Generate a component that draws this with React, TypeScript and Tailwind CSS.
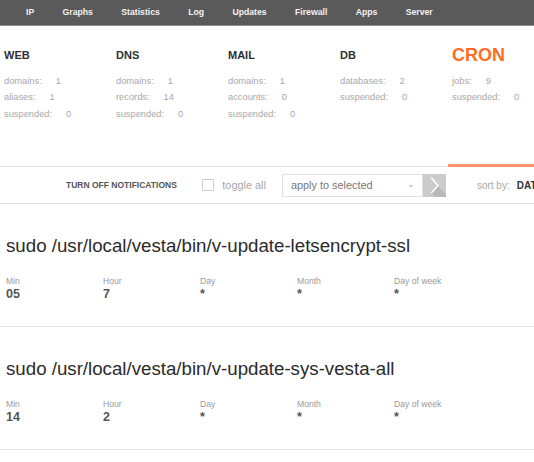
import React from 'react'

const nav = ['IP', 'Graphs', 'Statistics', 'Log', 'Updates', 'Firewall', 'Apps', 'Server']

const stats: { title: string; active?: boolean; rows: [string, string][] }[] = [
  { title: 'WEB', rows: [['domains:', '1'], ['aliases:', '1'], ['suspended:', '0']] },
  { title: 'DNS', rows: [['domains:', '1'], ['records:', '14'], ['suspended:', '0']] },
  { title: 'MAIL', rows: [['domains:', '1'], ['accounts:', '0'], ['suspended:', '0']] },
  { title: 'DB', rows: [['databases:', '2'], ['suspended:', '0']] },
  { title: 'CRON', active: true, rows: [['jobs:', '9'], ['suspended:', '0']] },
]

const jobs = [
  { cmd: 'sudo /usr/local/vesta/bin/v-update-letsencrypt-ssl', min: '05', hour: '7', day: '*', month: '*', dow: '*' },
  { cmd: 'sudo /usr/local/vesta/bin/v-update-sys-vesta-all', min: '14', hour: '2', day: '*', month: '*', dow: '*' },
]

function GoButton() {
  return (
    <svg width="23" height="23" viewBox="0 0 23 23" className="block shrink-0">
      <rect width="23" height="23" fill="#cbcbcb" />
      <polygon points="15,11.7 23,19.7 23,23 12.3,23 8.3,19" fill="#b9b9b9" />
      <polyline points="8.3,3.7 15,11.5 8.3,19" fill="none" stroke="#ffffff" strokeWidth="1.6" />
    </svg>
  )
}

export default function App() {
  return (
    <div className="w-[534px] overflow-hidden bg-white font-['Liberation_Sans',Arial,sans-serif]">
      {/* Top menu */}
      <div className="flex h-[26px] items-center gap-[28.3px] border-b border-[#8c8c8c] bg-[#5a5a5a] pl-[26px]">
        {nav.map((n) => (
          <span key={n} className="text-[8.7px] font-bold text-[#f2f2f2]">
            {n}
          </span>
        ))}
      </div>

      {/* Stats */}
      <div className="flex h-[141px] w-[560px]">
        {stats.map((s) => (
          <div
            key={s.title}
            className={
              s.active
                ? 'w-[112px] shrink-0 border-b-[3px] border-[#ff9468] pl-[4px] pt-[15px]'
                : 'w-[112px] shrink-0 border-b border-[#e3e3e3] pl-[4px] pt-[15px]'
            }
          >
            <div className="flex h-[20px] items-end">
              {s.active ? (
                <span className="text-[18px] font-bold leading-[11px] text-[#ff6b1f]">{s.title}</span>
              ) : (
                <span className="text-[11px] font-bold leading-[11px] text-[#2f2f36]">{s.title}</span>
              )}
            </div>
            <div className="mt-[11.7px] text-[9.3px] leading-[16.7px] text-[#a8a8a8]">
              {s.rows.map(([k, v]) => (
                <div key={k} className="flex">
                  <span>{k}</span>
                  <span className="ml-[14px]">{v}</span>
                </div>
              ))}
            </div>
          </div>
        ))}
      </div>

      {/* Toolbar */}
      <div className="flex h-[37px] w-[600px] items-center border-b border-[#e3e3e3] pl-[66px] whitespace-nowrap">
        <span className="shrink-0 text-[8.5px] font-bold text-[#555]">TURN OFF NOTIFICATIONS</span>
        <span className="ml-[25.5px] block h-[12px] w-[12px] shrink-0 border border-[#cfcfcf] bg-white" />
        <span className="ml-[8px] shrink-0 text-[10.9px] text-[#a8a8a8]">toggle all</span>
        <div className="ml-[16px] flex h-[23px] shrink-0 items-center">
          <div className="relative flex h-[23px] w-[141px] items-center border border-[#e2e2e2] pl-[8px] text-[10.9px] text-[#777]">
            apply to selected
            <span className="absolute right-[9px] top-[10px] h-0 w-0 border-x-[2.5px] border-t-[3px] border-x-transparent border-t-[#c8c8c8]" />
          </div>
          <GoButton />
        </div>
        <span className="ml-[31px] shrink-0 text-[10px] text-[#a8a8a8]">sort by:</span>
        <span className="ml-[7px] shrink-0 text-[10px] font-bold text-[#333]">DATE</span>
      </div>

      {/* Cron jobs */}
      {jobs.map((j) => (
        <div key={j.cmd} className="border-b border-[#e5e5e5] pb-[25px] pl-[6px] pt-[31px]">
          <div className="text-[18.7px] leading-[22px] text-[#2b2b2b] whitespace-nowrap">{j.cmd}</div>
          <div className="mt-[19px] flex">
            {[
              ['Min', j.min],
              ['Hour', j.hour],
              ['Day', j.day],
              ['Month', j.month],
              ['Day of week', j.dow],
            ].map(([l, v]) => (
              <div key={l} className="w-[97px] shrink-0">
                <div className="text-[8.6px] leading-[10px] text-[#9a9a9a]">{l}</div>
                <div className="mt-[1px] text-[12.5px] font-bold leading-[14px] text-[#555]">{v}</div>
              </div>
            ))}
          </div>
        </div>
      ))}
    </div>
  )
}
